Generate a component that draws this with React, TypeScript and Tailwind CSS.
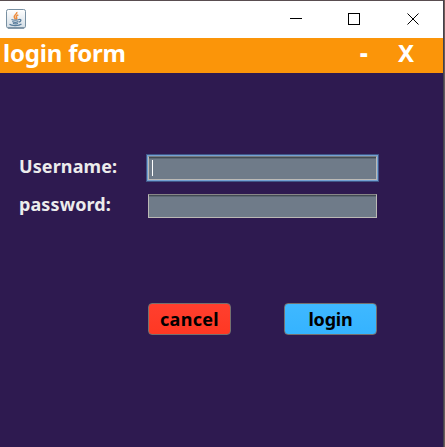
function JavaIcon() {
  return (
    <svg width="20" height="20" viewBox="0 0 20 20">
      <defs>
        <linearGradient id="tile" x1="0" y1="0" x2="0" y2="1">
          <stop offset="0" stopColor="#ffffff" />
          <stop offset="1" stopColor="#d3dde5" />
        </linearGradient>
      </defs>
      <rect x="0.5" y="0.5" width="19" height="18.5" rx="1.8" fill="url(#tile)" stroke="#7890a2" />
      <path d="M2 19h16" stroke="#526f85" />
      <path d="M10.8 3c.8 2-3.500 3-2.500 5.200.4.9 1 1.300 1 2.300M12.300 5.800c-2 1-2.500 1.700-1.700 2.700.6.8 0 1.500-.4 2" fill="none" stroke="#ed8b3c" strokeWidth="1.500" />
      <path d="M5.500 10.500c1.500.8 6 .8 7.500 0M6.300 12.500c1.500.8 4.500.8 6 0M7 14.300c1.300.6 3.700.6 5 0M13 10.500c2.700-.5 2.500 2-.3 2.700M3.500 15.300c2 1.700 9.500 1.700 12-.3" fill="none" stroke="#587c9b" strokeWidth="1.200" />
    </svg>
  );
}

function TitleBar() {
  return (
    <div className="flex h-[37px] items-start bg-white pl-1.5 pt-2">
      <JavaIcon />
      <svg className="ml-[264px]" width="130" height="20" fill="none" stroke="#000" shapeRendering="crispEdges">
        <path d="M0 9.500h12" />
        <rect x="58.500" y="4.500" width="11" height="11" />
        <path d="M117.500 4.500l11 11M128.500 4.500l-11 11" shapeRendering="auto" />
      </svg>
    </div>
  );
}

export default function App() {
  return (
    <div className="flex h-[447px] w-[445px] overflow-hidden bg-[#2e1a50] font-['Noto_Sans',sans-serif] font-bold">
      <div className="flex w-[443px] flex-col">
        <div className="h-px bg-[#594d50]" />
        <TitleBar />
        <header className="flex h-[35px] bg-[#fb9509] pl-[3px] text-[24px] leading-[30px] text-white">
          <span className="w-[357px] tracking-[-0.2px]">login form</span>
          <span className="w-[38px] font-black">-</span>
          <span>X</span>
        </header>
        <main className="flex flex-1 flex-col pt-[81px]">
          <div className="flex h-7">
            <label className="w-[146px] pl-[19px] text-[18px] leading-[25px] tracking-[0.1px] text-[#ececec]">Username:</label>
            <div className="h-7 w-[233px] border border-[#405687] bg-[#73a0d2] p-px">
              <div className="flex h-6 border border-t-[#777e83] border-r-[#bbb9b5] border-b-[#bbb9b5] border-l-[#bbb9b5] bg-[#6f7b89] pl-[3px] pt-[3px] shadow-[inset_0_1px_#424b54,inset_0_2px_#5d6873]">
                <span className="h-4 w-px bg-white" />
              </div>
            </div>
          </div>
          <div className="mt-3 flex h-6">
            <label className="w-[148px] pl-[19px] text-[18px] leading-[21px] tracking-[0.1px] text-[#ececec]">password:</label>
            <div className="h-6 w-[229px] border border-t-[#888788] border-r-[#bbb9b5] border-b-[#bbb9b5] border-l-[#bbb9b5] bg-[#6f7b89] shadow-[inset_0_1px_#424b54,inset_0_2px_#5d6873]" />
          </div>
          <div className="ml-[148px] mt-[85px] flex gap-[53px] text-[18px] leading-[30px] text-black">
            <button className="h-8 w-[83px] rounded-[4px] border border-[#75706f] bg-linear-to-b from-[#ff3f2e] to-[#ff3823] tracking-[0.3px]">cancel</button>
            <button className="h-8 w-[93px] rounded-[4px] border border-[#75706f] bg-linear-to-b from-[#3fb8ff] to-[#35b3ff] tracking-[-0.2px]">login</button>
          </div>
        </main>
      </div>
      <div className="w-px bg-[#43414b]" />
      <div className="w-px bg-linear-to-b from-[#765c57] via-[#40536a] to-[#6b5d59]" />
    </div>
  );
}
